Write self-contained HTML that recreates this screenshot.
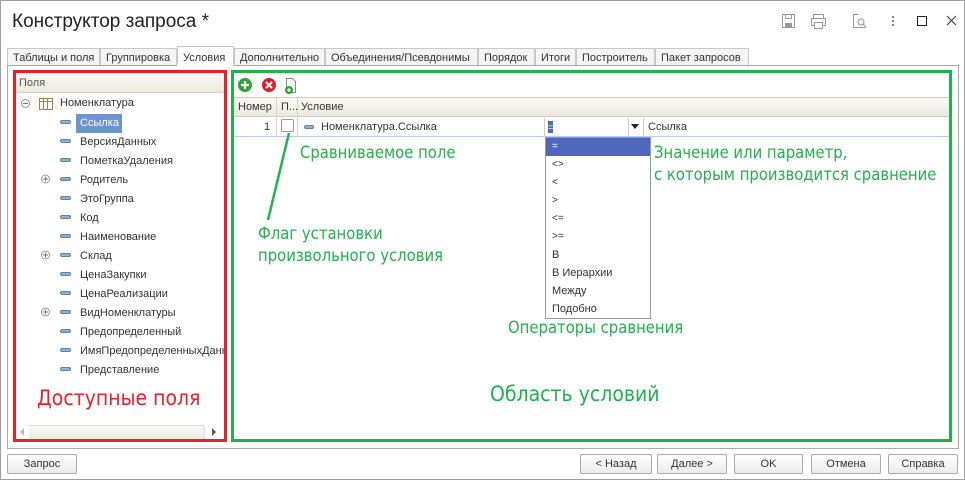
<!DOCTYPE html>
<html><head><meta charset="utf-8"><style>
*{margin:0;padding:0;box-sizing:border-box}
body{width:965px;height:480px;background:#fff;font-family:"Liberation Sans","DejaVu Sans",sans-serif;font-size:11px;color:#333;position:relative;overflow:hidden}
.a{position:absolute}
.win{left:0;top:0;width:965px;height:480px;border:1px solid #a0a0a0}
.title{left:12px;top:11px;font-size:19px;color:#222}
.tab{top:48px;height:18px;border:1px solid #c8c8c8;border-bottom:none;background:#f5f5f5;font-size:11px;padding:3px 0 0 5px;color:#333}
.tab.on{top:46px;height:20px;background:#fff;padding-top:5px}
.panel{left:7px;top:65px;width:952px;height:384px;border:1px solid #aaa}
.red{left:13px;top:70px;width:214px;height:372px;border:3px solid #e8202a}
.green{left:231px;top:70px;width:721px;height:372px;border:3px solid #22b14c}
.hdr{background:linear-gradient(#fbfaf6,#ece9dc)}
.row{font-size:11px;color:#333}
.ann{color:#22b14c;font-size:16.5px;font-family:"DejaVu Sans Condensed","DejaVu Sans",sans-serif;font-stretch:condensed}
.btn{top:454px;height:20px;border:1px solid #aaa;border-radius:2px;background:linear-gradient(#fff,#ececec);font-size:11px;text-align:center;line-height:18px;color:#333}
.dd div{height:18px;padding-left:6px;line-height:18px;font-size:10px;color:#333}
</style></head><body>
<div class="a win"></div>
<div class="a title">Конструктор запроса *</div>
<svg class="a" style="left:780px;top:12px" width="180" height="20">
<g fill="none" stroke="#999" stroke-width="1">
<rect x="2.5" y="2.5" width="12" height="13"/><rect x="5.5" y="2.5" width="6" height="4"/><rect x="5.5" y="11.5" width="6" height="4" fill="#999"/>
<rect x="33.5" y="2.5" width="10" height="4"/><rect x="31.5" y="6.5" width="14" height="7"/><rect x="34.5" y="10.5" width="8" height="6" fill="#fff"/>
<path d="M78.5 2.5h-5v13h12"/><circle cx="81" cy="10" r="3"/><path d="M83 12l3 3"/>
</g>
<g fill="#888"><rect x="112" y="4" width="2" height="2"/><rect x="112" y="8" width="2" height="2"/><rect x="112" y="12" width="2" height="2"/></g>
<rect x="137.5" y="4.5" width="9" height="9" fill="none" stroke="#222"/>
<path d="M167 4l9 9M176 4l-9 9" stroke="#444" stroke-width="1.2"/>
</svg>
<div class="a tab" style="left:7px;width:93px">Таблицы и поля</div>
<div class="a tab" style="left:100px;width:77px">Группировка</div>
<div class="a tab on" style="left:177px;width:57px">Условия</div>
<div class="a tab" style="left:234px;width:91px">Дополнительно</div>
<div class="a tab" style="left:325px;width:153px">Объединения/Псевдонимы</div>
<div class="a tab" style="left:478px;width:57px">Порядок</div>
<div class="a tab" style="left:535px;width:41px">Итоги</div>
<div class="a tab" style="left:576px;width:79px">Построитель</div>
<div class="a tab" style="left:655px;width:94px">Пакет запросов</div>
<div class="a panel"></div>
<div class="a" style="left:177px;top:64px;width:57px;height:3px;background:#fff"></div>
<div class="a red"></div>
<div class="a green"></div>
<div class="a hdr" style="left:16px;top:73px;width:208px;height:20px;border-bottom:1px solid #d8d4c4;padding:4px 0 0 3px;color:#555">Поля</div>
<svg class="a" style="left:20px;top:97px" width="40" height="14"><circle cx="5.5" cy="6.5" r="4" fill="none" stroke="#999"/><path d="M3 6.5h5" stroke="#777"/><g fill="none" stroke="#a08a40"><rect x="19.5" y="1.5" width="13" height="11"/><path d="M23.5 2v10M27.5 2v10M20 4.5h12"/></g></svg>
<div class="a row" style="left:60px;top:97px">Номенклатура</div>
<div class="a" style="left:76px;top:114px;width:46px;height:19px;background:#6c94cd"></div>
<div class="a row" style="left:80px;top:117px;color:#fff">Ссылка</div>
<div class="a row" style="left:80px;top:136px">ВерсияДанных</div>
<div class="a row" style="left:80px;top:155px">ПометкаУдаления</div>
<div class="a row" style="left:80px;top:174px">Родитель</div>
<div class="a row" style="left:80px;top:193px">ЭтоГруппа</div>
<div class="a row" style="left:80px;top:212px">Код</div>
<div class="a row" style="left:80px;top:231px">Наименование</div>
<div class="a row" style="left:80px;top:250px">Склад</div>
<div class="a row" style="left:80px;top:269px">ЦенаЗакупки</div>
<div class="a row" style="left:80px;top:288px">ЦенаРеализации</div>
<div class="a row" style="left:80px;top:307px">ВидНоменклатуры</div>
<div class="a row" style="left:80px;top:326px">Предопределенный</div>
<div class="a row" style="left:80px;top:345px;width:144px;overflow:hidden;white-space:nowrap">ИмяПредопределенныхДанных</div>
<div class="a row" style="left:80px;top:364px">Представление</div>
<svg class="a" style="left:36px;top:117px" width="40" height="265">
<g fill="#8fb0d0" stroke="#5f86ad"><rect x="24.5" y="3.5" width="10" height="3" rx="1.5"/><rect x="24.5" y="22.5" width="10" height="3" rx="1.5"/><rect x="24.5" y="41.5" width="10" height="3" rx="1.5"/><rect x="24.5" y="60.5" width="10" height="3" rx="1.5"/><rect x="24.5" y="79.5" width="10" height="3" rx="1.5"/><rect x="24.5" y="98.5" width="10" height="3" rx="1.5"/><rect x="24.5" y="117.5" width="10" height="3" rx="1.5"/><rect x="24.5" y="136.5" width="10" height="3" rx="1.5"/><rect x="24.5" y="155.5" width="10" height="3" rx="1.5"/><rect x="24.5" y="174.5" width="10" height="3" rx="1.5"/><rect x="24.5" y="193.5" width="10" height="3" rx="1.5"/><rect x="24.5" y="212.5" width="10" height="3" rx="1.5"/><rect x="24.5" y="231.5" width="10" height="3" rx="1.5"/><rect x="24.5" y="250.5" width="10" height="3" rx="1.5"/></g>
<g fill="none" stroke="#999"><circle cx="9.5" cy="62" r="4"/><circle cx="9.5" cy="138" r="4"/><circle cx="9.5" cy="195" r="4"/></g>
<g stroke="#777"><path d="M7 62h5M9.5 59.5v5M7 138h5M9.5 135.5v5M7 195h5M9.5 192.5v5"/></g>
</svg>
<div class="a" style="left:37px;top:386px;font-size:21px;color:#e8202a;font-family:'DejaVu Sans Condensed','DejaVu Sans',sans-serif">Доступные поля</div>
<div class="a hdr" style="left:16px;top:425px;width:208px;height:14px;border-top:1px solid #ddd"></div>
<div class="a" style="left:17px;top:425px;width:12px;height:14px;background:#fff"></div>
<div class="a" style="left:204px;top:425px;width:20px;height:14px;background:#fff;border-left:1px solid #ddd"></div>
<div class="a" style="left:20px;top:428px;border:4px solid transparent;border-right-color:#bbb;border-left:none"></div>
<div class="a" style="left:212px;top:428px;border:4px solid transparent;border-left-color:#555;border-right:none"></div>
<svg class="a" style="left:236px;top:76px" width="64" height="18">
<circle cx="9" cy="9" r="7" fill="#2ea33a"/><path d="M9 5v8M5 9h8" stroke="#fff" stroke-width="2.2"/>
<circle cx="33" cy="9" r="7" fill="#d6222a"/><path d="M30 6l6 6M36 6l-6 6" stroke="#fff" stroke-width="2"/>
<path d="M50.5 2.5h6l3 3v11h-9z" fill="#fff" stroke="#888"/><circle cx="53" cy="14" r="4" fill="#2ea33a"/><path d="M53 12v4M51 14h4" stroke="#fff" stroke-width="1.2"/>
</svg>
<div class="a hdr" style="left:234px;top:97px;width:715px;height:20px;border-top:1px solid #ccc;border-bottom:1px solid #ccc"></div>
<div class="a" style="left:276px;top:97px;width:1px;height:40px;background:#d8d4c4"></div>
<div class="a" style="left:297px;top:97px;width:1px;height:40px;background:#d8d4c4"></div>
<div class="a row" style="left:238px;top:101px">Номер</div>
<div class="a row" style="left:281px;top:101px">П...</div>
<div class="a row" style="left:301px;top:101px">Условие</div>
<div class="a" style="left:234px;top:136px;width:715px;height:1px;background:#b8cfe8"></div>
<div class="a row" style="left:264px;top:121px">1</div>
<div class="a" style="left:281px;top:119px;width:13px;height:13px;border:1px solid #a89a6a;border-radius:2px"></div>
<div class="a" style="left:304px;top:125px;width:10px;height:4px;border-radius:2px;background:#8fb0d0;border:1px solid #5f86ad"></div>
<div class="a row" style="left:321px;top:121px">Номенклатура.Ссылка</div>
<div class="a" style="left:544px;top:118px;width:1px;height:18px;background:#ccc"></div>
<div class="a" style="left:548px;top:121px;width:5px;height:12px;background:#4e68c0;color:#fff;font-size:9px;line-height:12px">=</div>
<div class="a" style="left:628px;top:118px;width:1px;height:18px;background:#ccc"></div>
<div class="a" style="left:631px;top:124px;border:4px solid transparent;border-top:5px solid #222;border-bottom:none"></div>
<div class="a" style="left:643px;top:118px;width:1px;height:18px;background:#ccc"></div>
<div class="a row" style="left:648px;top:121px">Ссылка</div>
<div class="a dd" style="left:545px;top:137px;width:106px;height:182px;border:1px solid #999;background:#fff">
<div style="background:#4e68c0;color:#fff">=</div><div>&lt;&gt;</div><div>&lt;</div><div>&gt;</div><div>&lt;=</div><div>&gt;=</div><div style="font-size:11px">В</div><div style="font-size:11px">В Иерархии</div><div style="font-size:11px">Между</div><div style="font-size:11px">Подобно</div>
</div>
<svg class="a" style="left:260px;top:130px" width="40" height="95"><path d="M29 3L8 90" stroke="#22b14c" stroke-width="2.5"/></svg>
<div class="a ann" style="left:300px;top:143px">Сравниваемое поле</div>
<div class="a ann" style="left:654px;top:143px">Значение или параметр,</div>
<div class="a ann" style="left:654px;top:165px">с которым производится сравнение</div>
<div class="a ann" style="left:258px;top:224px">Флаг установки</div>
<div class="a ann" style="left:258px;top:246px">произвольного условия</div>
<div class="a ann" style="left:508px;top:318px">Операторы сравнения</div>
<div class="a ann" style="left:490px;top:382px;font-size:21px">Область условий</div>
<div class="a btn" style="left:7px;width:70px">Запрос</div>
<div class="a btn" style="left:580px;width:72px">&lt; Назад</div>
<div class="a btn" style="left:657px;width:70px">Далее &gt;</div>
<div class="a btn" style="left:734px;width:69px">OK</div>
<div class="a btn" style="left:811px;width:70px">Отмена</div>
<div class="a btn" style="left:888px;width:70px">Справка</div>
</body></html>
